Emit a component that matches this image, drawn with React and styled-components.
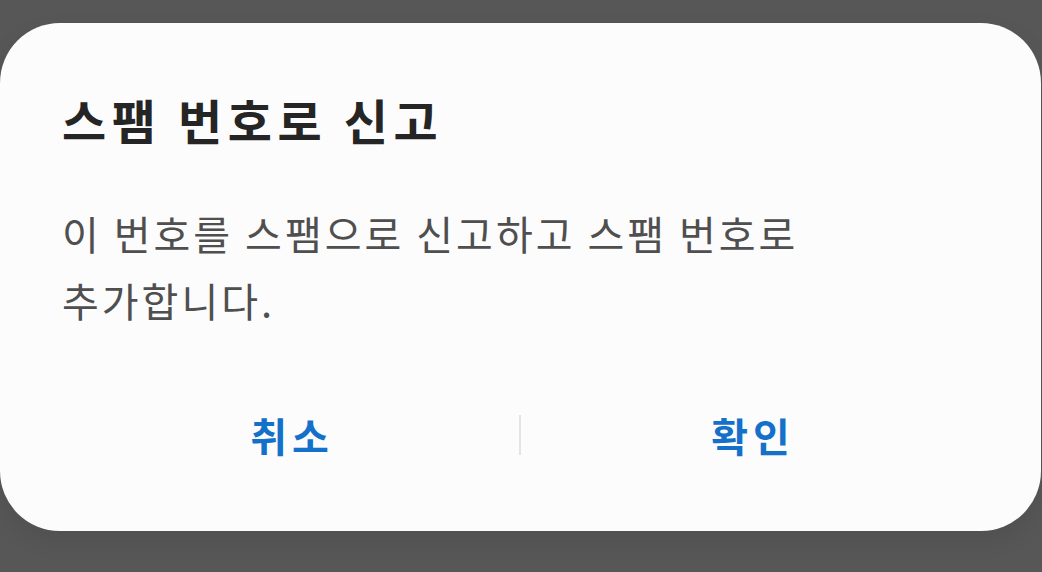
import React from 'react'
import styled, { createGlobalStyle } from 'styled-components'

const GlobalStyle = createGlobalStyle`
  html, body {
    margin: 0;
    padding: 0;
    background: #575757;
    height: 100%;
    overflow: hidden;
  }
  body {
    font-family: "Noto Sans CJK KR", "Noto Sans", sans-serif;
  }
`

const Screen = styled.div`
  width: 1042px;
  height: 572px;
  padding-top: 23px;
  box-sizing: border-box;
`

const Dialog = styled.div`
  width: 1041px;
  height: 508px;
  box-sizing: border-box;
  background: #fcfcfc;
  border-radius: 60px;
  padding: 66px 0 0 0;
  display: flex;
  flex-direction: column;
  box-shadow: 0 10px 24px rgba(0, 0, 0, 0.08);
`

const Title = styled.h2`
  margin: 0;
  padding: 0 62px;
  font-size: 48px;
  line-height: 60px;
  font-weight: 700;
  color: #252525;
  letter-spacing: 5.6px;
`

const Message = styled.p`
  margin: 51px 0 0 0;
  padding: 0 62px;
  font-size: 40px;
  line-height: 67px;
  font-weight: 400;
  color: #4f4f4f;
  letter-spacing: 3px;
`

const ButtonRow = styled.div`
  margin-top: 61px;
  padding: 0 61px 0 60px;
  height: 80px;
  display: flex;
  align-items: center;
`

const Button = styled.button`
  flex: 1;
  height: 80px;
  border: none;
  background: transparent;
  padding: 0 0 0 5px;
  font-family: inherit;
  font-size: 40px;
  font-weight: 700;
  color: #1470c8;
  letter-spacing: 5px;
  cursor: pointer;
`

const Divider = styled.div`
  width: 2px;
  height: 40px;
  background: #e4e4e4;
`

export default function App() {
  return (
    <>
      <GlobalStyle />
      <Screen>
        <Dialog>
          <Title>스팸 번호로 신고</Title>
          <Message>
            이 번호를 스팸으로 신고하고 스팸 번호로
            <br />
            추가합니다.
          </Message>
          <ButtonRow>
            <Button>취소</Button>
            <Divider />
            <Button>확인</Button>
          </ButtonRow>
        </Dialog>
      </Screen>
    </>
  )
}
